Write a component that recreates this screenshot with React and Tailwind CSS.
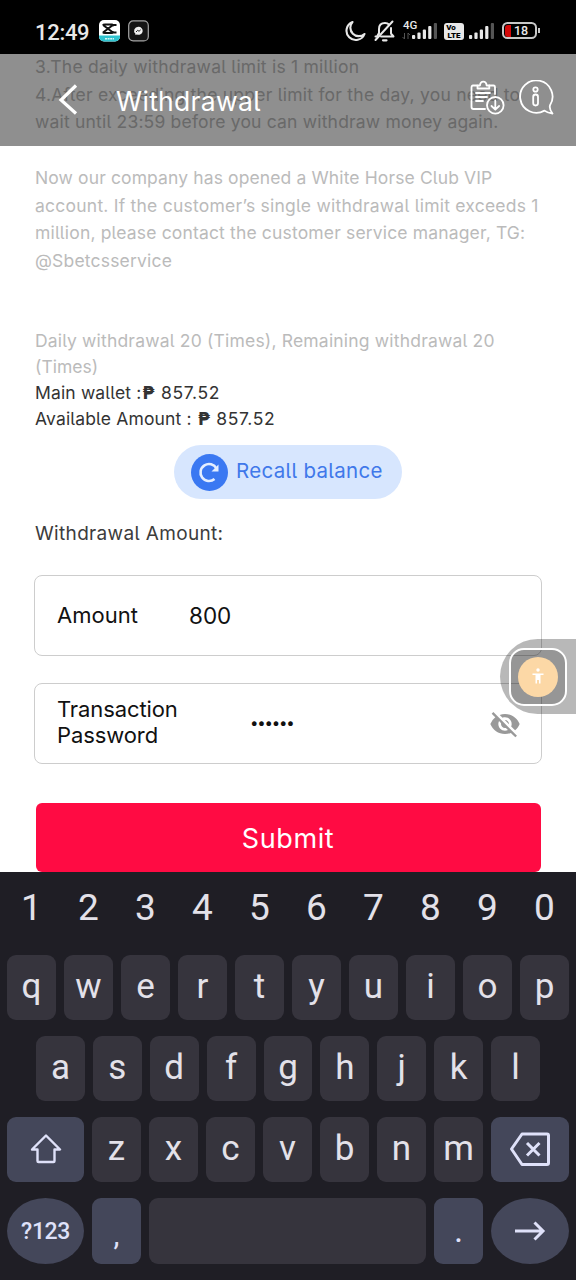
import { MdVisibilityOff } from 'react-icons/md'

const NUMBERS = ['1', '2', '3', '4', '5', '6', '7', '8', '9', '0']
const ROW_ONE = ['q', 'w', 'e', 'r', 't', 'y', 'u', 'i', 'o', 'p']
const ROW_TWO = ['a', 's', 'd', 'f', 'g', 'h', 'j', 'k', 'l']
const ROW_THREE = ['z', 'x', 'c', 'v', 'b', 'n', 'm']

const SignalBars = () => (
  <svg width="26" height="18" viewBox="0 0 26 18" fill="#e8e8e8">
    <rect x="0" y="13" width="3.2" height="4" rx="1" />
    <rect x="5.4" y="10.5" width="3.2" height="6.5" rx="1" />
    <rect x="10.8" y="7.5" width="3.2" height="9.5" rx="1" />
    <rect x="16.2" y="4" width="3.2" height="13" rx="1" />
    <rect x="21.8" y="1" width="3.2" height="16" rx="1" fill="#555" />
  </svg>
)

const StatusBar = () => (
  <div className="flex h-[54px] items-start bg-black pt-[20px] pl-[36px] font-['Roboto',sans-serif] text-[#e8e8e8]">
    <span className="mt-px -ml-px w-[63px] text-[22px] leading-[23px] font-medium tracking-[-0.3px]">12:49</span>
    <svg className="ml-[1px]" width="21" height="22" viewBox="0 0 21 22">
      <defs>
        <clipPath id="app">
          <rect width="21" height="21.5" rx="5" />
        </clipPath>
      </defs>
      <g clipPath="url(#app)">
        <rect width="21" height="22" fill="#fff" />
        <rect y="15.5" width="21" height="6.5" fill="#2fc3cf" />
        <path d="M17.5 5 L14 5 L4 12.5 M17.5 12.5 L14 12.5 L4 5 M4 5.2 Q4.3 4.5 6 4.5 H13 L15 5.5 M4 12.3 Q4.3 13 6 13 H13 L15 12" fill="none" stroke="#111" strokeWidth="2" />
        <path d="M6 18.8 H15" stroke="#d5f5f6" strokeWidth="1.6" strokeDasharray="2 .6" />
      </g>
    </svg>
    <svg className="ml-[8px]" width="21" height="22" viewBox="0 0 21 22">
      <rect x=".7" y=".9" width="19.6" height="20" rx="4.5" fill="#151515" stroke="#a5a5a5" strokeWidth="1.2" />
      <path d="M10.3 6.8 a4.2 4 0 0 0 -2.9 6.9 v1.4 l1.5 -.6 a4.2 4 0 1 0 1.4 -7.7z" fill="#f1f1f1" />
      <path d="M8 12 l1.7 -1.7 l1.3 1 l1.7 -1.5" stroke="#222" fill="none" />
    </svg>
    <svg className="ml-[196px]" width="21" height="22" viewBox="0 0 21 22" fill="none" stroke="#e8e8e8" strokeWidth="2.1" strokeLinejoin="round">
      <path d="M7.5 2 A9.3 9.3 0 1 0 19.5 14 A8.5 8.5 0 0 1 7.5 2z" />
    </svg>
    <svg className="ml-[8px]" width="23" height="22" viewBox="0 0 23 22" fill="none" stroke="#e8e8e8" strokeWidth="2" strokeLinecap="round" strokeLinejoin="round">
      <path d="M5 13 V9 Q5 3 11 3 Q13.5 3 15 4.5 M17 8 V13.5 L19.5 16.5 H7" />
      <path d="M1.5 20 L18.5 1.5" />
      <path d="M1.500 16.5 H3 L5 13" />
      <path d="M9 20.3 H12.500" strokeWidth="2.2" />
    </svg>
    <div className="relative ml-[6px] flex h-[22px] w-[35px] justify-end pt-[2px]">
      <span className="absolute -top-[1px] left-0 text-[11.5px] leading-[13px] font-medium">4G</span>
      <svg className="absolute top-[12px] -left-px" width="9" height="8" viewBox="0 0 9 8" stroke="#555" fill="none">
        <path d="M2.5 1 V7 L.5 5 M6 7 V1 L8 3" />
      </svg>
      <SignalBars />
    </div>
    <div className="mt-[3px] ml-[6px] flex h-[17px] w-[20px] flex-col items-center justify-center rounded-[3px] bg-[#e8e8e8] text-[8px] leading-[7.5px] font-black text-black">
      <span className="-ml-[6px]">Vo</span>
      <span>LTE</span>
    </div>
    <div className="ml-[5px] pt-[2px]">
      <SignalBars />
    </div>
    <div className="mt-[2px] ml-[7px] flex h-[17px] w-[35px] items-center rounded-[5.5px] border-[2px] border-[#c8c8c8] pl-px">
      <div className="h-[12px] w-[6px] rounded-l-[3px] bg-[#d40808]" />
      <span className="ml-[3px] text-[12.5px] leading-3 font-medium">18</span>
    </div>
    <div className="mt-[8px] ml-px h-[5px] w-[1.5px] bg-[#c8c8c8]" />
  </div>
)

const Header = () => (
  <div className="absolute inset-x-0 top-0 flex h-[92px] items-start bg-black/44">
    <svg className="mt-[30px] ml-[58px]" width="20" height="32" viewBox="0 0 20 32" fill="none" stroke="#fff" strokeWidth="3.2">
      <path d="M18 1.5 L3 16 L18 29.5" />
    </svg>
    <h1 className="mt-[30px] ml-[38px] w-[354px] text-[26.5px] leading-[34px] tracking-[0.3px] text-white">Withdrawal</h1>
    <svg className="mt-[26px]" width="36" height="36" viewBox="0 0 36 36" fill="none" stroke="#fff" strokeWidth="1.8" strokeLinecap="round" strokeLinejoin="round">
      <path d="M7 5.5 H3 Q1.5 5.500 1.5 7.5 V27 Q1.5 29 3.5 29 H15 M19.5 5.5 H23.5 Q25 5.5 25 7.5 V14" />
      <path d="M7.5 8.5 V5.5 H10 Q10.3 1.7 13.3 1.7 Q16.3 1.7 16.6 5.5 H19.3 V8.5z" />
      <path d="M6 13 H20 M6 17 H17 M6 21 H13" />
      <circle cx="25.3" cy="25.3" r="8.3" />
      <path d="M25.3 20.5 V29.5 M21.5 26 L25.3 29.7 L29.1 26" />
    </svg>
    <svg className="mt-[26px] ml-[12px]" width="36" height="36" viewBox="0 0 36 36" fill="none" stroke="#fff" strokeWidth="1.8" strokeLinejoin="round">
      <path d="M26.5 30.6 A16.2 16.2 0 1 1 32 25.3 Q31 29 34.5 33.5 Q29.5 33 26.5 30.6z" />
      <circle cx="17.5" cy="9.5" r="2.2" />
      <rect x="15.2" y="14.5" width="4.8" height="11" rx="2.4" />
    </svg>
  </div>
)

const Notice = () => (
  <div className="-mt-px flex flex-col text-[17.5px] leading-[27.7px] tracking-[0.19px] whitespace-nowrap text-[#bbb]">
    <span className="tracking-[0.22px]">3.The daily withdrawal limit is 1 million</span>
    <span className="tracking-[0.24px]">4.After exceeding the upper limit for the day, you need to</span>
    <span>wait until 23:59 before you can withdraw money again.</span>
    <span className="mt-[27.7px] tracking-[0.12px]">Now our company has opened a White Horse Club VIP</span>
    <span className="tracking-[0.23px]">account. If the customer’s single withdrawal limit exceeds 1</span>
    <span className="tracking-[0.16px]">million, please contact the customer service manager, TG:</span>
    <span>@Sbetcsservice</span>
  </div>
)

const Peso = () => (
  <span className="inline-block w-[14px] text-center font-['DejaVu_Sans',sans-serif] text-[17px] leading-none font-bold tracking-normal">₱</span>
)

const Wallet = () => (
  <div className="mt-[53px] flex flex-col text-[17.5px] leading-[26.2px] whitespace-nowrap text-[#333]">
    <span className="tracking-[0.19px] text-[#bbb]">Daily withdrawal 20 (Times), Remaining withdrawal 20</span>
    <span className="text-[#bbb]">(Times)</span>
    <span className="tracking-[0.15px]">Main wallet :<Peso /><span className="tracking-[0.6px]"> 857.52</span></span>
    <span className="tracking-[0.15px]">Available Amount : <Peso /><span className="tracking-[0.6px]"> 857.52</span></span>
  </div>
)

const RecallButton = () => (
  <button className="mx-auto mt-[13px] flex h-[54px] w-[228px] items-center rounded-full bg-[#d7e6fe] pl-[17px] text-[#4078ea]">
    <svg width="37" height="37" viewBox="0 0 37 37" fill="none">
      <circle cx="18.5" cy="18.5" r="18.5" fill="#3a78f2" />
      <path d="M23.5 25 A8.5 8.5 0 1 1 25.5 14.5" stroke="#e4eeff" strokeWidth="2.6" />
      <path d="M27.5 10.5 V17.5 H20.5z" fill="#e4eeff" />
    </svg>
    <span className="-mt-px ml-[8px] text-[20.5px] tracking-[0.3px] whitespace-nowrap">Recall balance</span>
  </button>
)

const FloatingWidget = () => (
  <div className="absolute top-[585px] right-0 flex h-[75px] w-[76px] items-center rounded-l-full bg-black/28 pl-[9px]">
    <div className="flex h-[58px] w-[58px] items-center justify-center rounded-[15px] border-2 border-white bg-black/18">
      <svg width="40" height="40" viewBox="0 0 40 40">
        <circle cx="20" cy="20" r="20" fill="#fcd8a6" />
        <circle cx="20" cy="13" r="1.7" fill="#fff" />
        <path d="M14.5 16.5 H25.5 V18 H22.5 V26.5 H21 V23 H19 V26.5 H17.500 V18 H14.500z" fill="#fff" />
      </svg>
    </div>
  </div>
)

const Key = ({ children, className = 'bg-[#36343d]' }) => (
  <div className={`flex h-[65px] min-w-0 flex-1 items-center justify-center rounded-[9px] pb-[3px] ${className}`}>
    {children}
  </div>
)

const Keyboard = () => (
  <div className="flex h-[408px] flex-col gap-4 bg-[#1f1e25] font-['Roboto',sans-serif] text-[35px] leading-none text-[#e3e1e9]">
    <div className="flex h-[67px] items-center gap-2 px-[7px] pt-[4px]">
      {NUMBERS.map(n => (
        <span key={n} className="flex-1 text-center text-[37px]">{n}</span>
      ))}
    </div>
    <div className="flex gap-2 px-[7px]">
      {ROW_ONE.map(k => <Key key={k}>{k}</Key>)}
    </div>
    <div className="flex gap-2 px-[36px]">
      {ROW_TWO.map(k => <Key key={k}>{k}</Key>)}
    </div>
    <div className="flex gap-2 px-[7px]">
      <div className="flex h-[65px] w-[77px] items-center justify-center rounded-[9px] bg-[#44475a]">
        <svg width="32" height="31" viewBox="0 0 32 31" fill="none" stroke="#dfe1f9" strokeWidth="2.4" strokeLinejoin="round">
          <path d="M16 1.5 L30 15.5 H24.5 V27 Q24.5 28 23.5 28 H8.5 Q7.5 28 7.5 27 V15.5 H2z" />
        </svg>
      </div>
      {ROW_THREE.map(k => <Key key={k}>{k}</Key>)}
      <div className="flex h-[65px] w-[78px] items-center justify-center rounded-[9px] bg-[#44475a] pb-[2px]">
        <svg width="42" height="34" viewBox="0 0 42 34" fill="none" stroke="#dfe1f9" strokeWidth="3" strokeLinejoin="round">
          <path d="M13 2 H38 Q39.5 2 39.5 3.5 V31 Q39.5 32.5 38 32.5 H13 L2.5 17z" />
          <path d="M18 11 L30.5 23.5 M30.5 11 L18 23.5" />
        </svg>
      </div>
    </div>
    <div className="flex gap-2 px-[7px]">
      <div className="flex h-[66px] w-[77px] items-center justify-center rounded-[50%] bg-[#44475a] text-[23px] font-medium tracking-[-0.4px] text-[#dfe1f9]">?123</div>
      <div className="flex h-[66px] w-[49px] items-center justify-center rounded-[9px] bg-[#44475a] pt-[7px] text-[30px] text-[#dfe1f9]">,</div>
      <div className="h-[66px] flex-1 rounded-[9px] bg-[#36343d]" />
      <div className="flex h-[66px] w-[49px] items-center justify-center rounded-[9px] bg-[#44475a] pb-[2px] text-[#dfe1f9]">.</div>
      <div className="flex h-[66px] w-[78px] items-center justify-center rounded-[50%] bg-[#44475a]">
        <svg width="32" height="20" viewBox="0 0 32 20" fill="none" stroke="#dfe1f9" strokeWidth="3">
          <path d="M1 10 H29 M20.5 1.5 L29 10 L20.5 18.5" />
        </svg>
      </div>
    </div>
  </div>
)

const App = () => {
  return (
    <div className="flex h-[1280px] w-[576px] flex-col overflow-hidden bg-white font-['Inter',sans-serif] [font-feature-settings:'cv05']">
      <StatusBar />
      <div className="relative flex h-[818px] flex-col overflow-hidden px-[34px]">
        <div className="flex flex-col pl-px">
          <Notice />
          <Wallet />
        </div>
        <RecallButton />
        <div className="mt-[21px] pl-px text-[19px] leading-7 tracking-[0.34px] text-[#3c3c3c]">Withdrawal Amount:</div>
        <div className="mt-[27px] flex h-[81px] shrink-0 items-center rounded-lg border border-[#cdcdcd] pl-[22px] text-[22px] text-[#111]">
          <span className="w-[132px]">Amount</span>
          <span className="text-[22.5px]">800</span>
        </div>
        <div className="mt-[27px] flex h-[81px] shrink-0 items-center rounded-lg border border-[#cdcdcd] pl-[22px] text-[22px] text-[#111]">
          <span className="-mt-[3px] w-[193px] leading-[26px] tracking-[-0.1px]">Transaction Password</span>
          <span className="w-[239px] text-[15px] tracking-[-1.2px]">••••••</span>
          <MdVisibilityOff size={32} className="shrink-0 text-[#999]" />
        </div>
        <button className="mx-[1.5px] mt-[39px] h-[69px] shrink-0 rounded-md bg-[#ff0b43] pt-1 text-[27px] tracking-[0.6px] text-white">Submit</button>
        <Header />
        <FloatingWidget />
      </div>
      <Keyboard />
    </div>
  )
}

export default App
